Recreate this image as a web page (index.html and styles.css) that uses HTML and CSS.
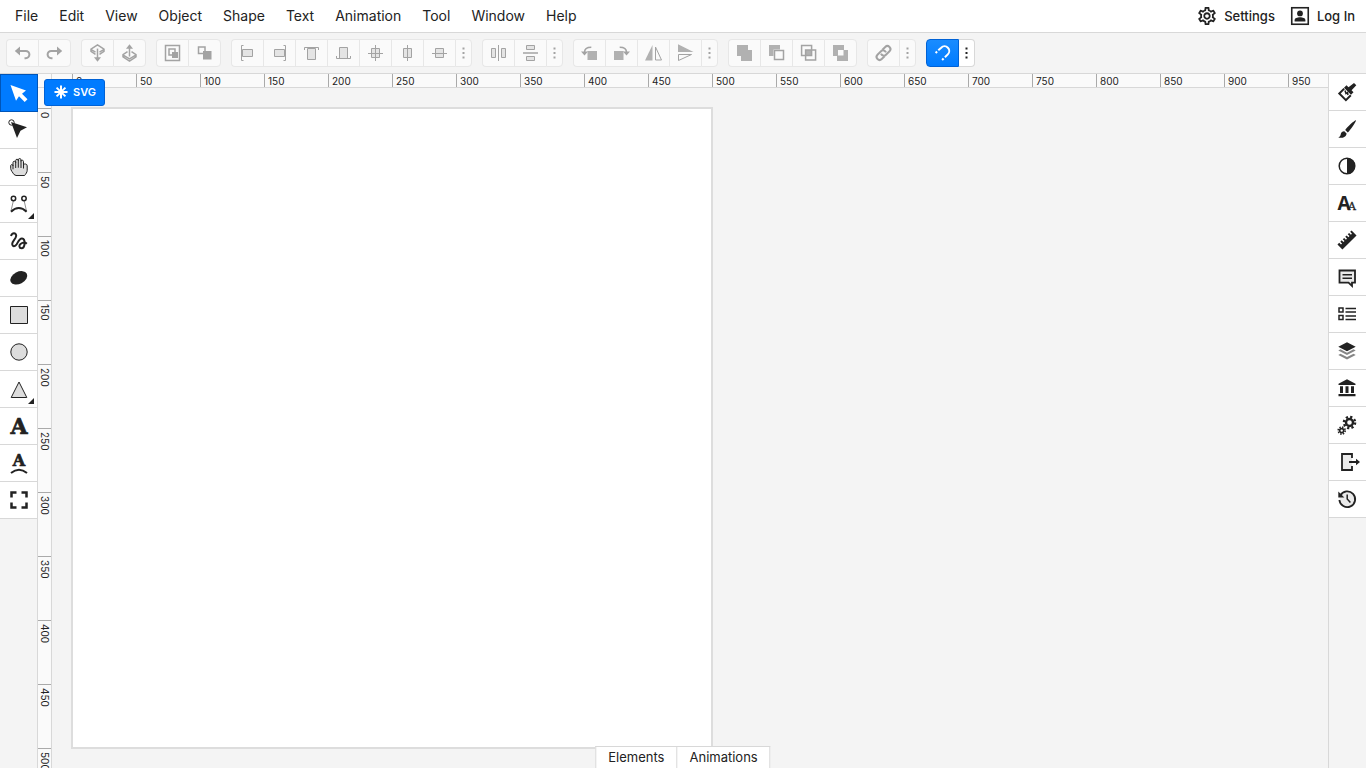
FILE: index.html
```html
<!DOCTYPE html>
<html lang="en">

<head>
    <meta charset="UTF-8">
    <meta name="viewport" content="width=device-width, initial-scale=1.0">
    <title>SVG Editor</title>
    <link rel="stylesheet" href="styles.css">
</head>

<body>
    <!-- HEADER -->
    <header class="Header">
        <nav class="Header-menu">
            <button class="Header-item">File</button>
            <button class="Header-item">Edit</button>
            <button class="Header-item">View</button>
            <button class="Header-item">Object</button>
            <button class="Header-item">Shape</button>
            <button class="Header-item">Text</button>
            <button class="Header-item">Animation</button>
            <button class="Header-item">Tool</button>
            <button class="Header-item">Window</button>
            <button class="Header-item">Help</button>
        </nav>
        <div class="Header-account">
            <button class="Header-action">
                <svg width="20" height="20" viewBox="1 1 22 22"><path fill="currentColor" d="M19.43 12.98c.04-.32.07-.64.07-.98 0-.34-.03-.66-.07-.98l2.11-1.65c.19-.15.24-.42.12-.64l-2-3.46c-.09-.16-.26-.25-.44-.25-.06 0-.12.01-.17.03l-2.49 1c-.52-.4-1.08-.73-1.69-.98l-.38-2.65C14.46 2.18 14.25 2 14 2h-4c-.25 0-.46.18-.49.42l-.38 2.65c-.61.25-1.17.59-1.69.98l-2.49-1c-.06-.02-.12-.03-.18-.03-.17 0-.34.09-.43.25l-2 3.46c-.13.22-.07.49.12.64l2.11 1.65c-.04.32-.07.65-.07.98 0 .33.03.66.07.98l-2.11 1.65c-.19.15-.24.42-.12.64l2 3.46c.09.16.26.25.44.25.06 0 .12-.01.17-.03l2.49-1c.52.4 1.08.73 1.69.98l.38 2.65c.03.24.24.42.49.42h4c.25 0 .46-.18.49-.42l.38-2.65c.61-.25 1.17-.59 1.69-.98l2.49 1c.06.02.12.03.18.03.17 0 .34-.09.43-.25l2-3.46c.12-.22.07-.49-.12-.64l-2.11-1.65zm-1.98-1.71c.04.31.05.52.05.73 0 .21-.02.43-.05.73l-.14 1.13.89.7 1.08.84-.7 1.21-1.27-.51-1.04-.42-.9.68c-.43.32-.84.56-1.25.73l-1.06.43-.16 1.13-.2 1.35h-1.4l-.19-1.35-.16-1.13-1.06-.43c-.43-.18-.83-.41-1.23-.71l-.91-.7-1.06.43-1.27.51-.7-1.21 1.08-.84.89-.7-.14-1.13c-.03-.31-.05-.54-.05-.74s.02-.43.05-.73l.14-1.13-.89-.7-1.08-.84.7-1.21 1.27.51 1.04.42.9-.68c.43-.32.84-.56 1.25-.73l1.06-.43.16-1.13.2-1.35h1.39l.19 1.35.16 1.13 1.06.43c.43.18.83.41 1.23.71l.91.7 1.06-.43 1.27-.51.7 1.21-1.07.85-.89.7.14 1.13zM12 8c-2.21 0-4 1.79-4 4s1.79 4 4 4 4-1.79 4-4-1.79-4-4-4zm0 6c-1.1 0-2-.9-2-2s.9-2 2-2 2 .9 2 2-.9 2-2 2z"/></svg>
                Settings
            </button>
            <button class="Header-action">
                <svg width="20" height="20" viewBox="0 0 20 20"><rect x="1.75" y="1.75" width="16.5" height="16.5" fill="none" stroke="currentColor" stroke-width="1.6"/><circle cx="10" cy="7.4" r="2.9" fill="currentColor"/><path fill="currentColor" d="M4.6 15.4v-1.3c0-1.8 2.7-2.8 5.4-2.8s5.4 1 5.4 2.8v1.3z"/></svg>
                Log In
            </button>
        </div>
    </header>

    <!-- TOOLBAR -->
    <div class="Toolbar">
        <div class="Toolbar-group">
            <button class="Toolbar-button" aria-label="Undo" disabled><svg width="17" height="18"><path class="fill" d="M.8 7 6 2.500v9z"/><path class="line-bold" d="M5 7h6.800a3.600 3.600 0 0 1 0 7.200H10.500"/></svg></button>
            <button class="Toolbar-button" aria-label="Redo" disabled><svg width="17" height="18"><path class="fill" d="M16.200 7 11 2.500v9z"/><path class="line-bold" d="M12 7H5.200a3.600 3.600 0 0 0 0 7.200H6.500"/></svg></button>
        </div>
        <div class="Toolbar-group">
            <button class="Toolbar-button" aria-label="Send backward" disabled><svg width="17" height="18"><path class="line" d="M6.500 10.300 2 7.400V5.200L8.500.9 15 5.200v2.200l-4.500 2.900M2.300 5.600l4.200 2.500M14.700 5.600l-4.200 2.500"/><path class="line" d="M8.500 4.600V14"/><path class="fill" d="M5 13.200h7l-3.500 4.600z"/></svg></button>
            <button class="Toolbar-button" aria-label="Bring forward" disabled><svg width="17" height="18"><path class="line" d="M6.500 7.700 2 10.600v2.200l6.500 4.300 6.500-4.300v-2.200l-4.500-2.900M2.300 11.200l6.200 3.600 6.200-3.600"/><path class="line" d="M8.500 4v8.500"/><path class="fill" d="M5 4.800h7L8.500.2z"/></svg></button>
        </div>
        <div class="Toolbar-group">
            <button class="Toolbar-button" aria-label="Group" disabled><svg width="17" height="18"><path class="line" d="M1.500 1.500h14v15h-14z"/><path class="line" d="M5 5h6v6H5z"/><path class="fill" d="M8 8h6v6H8z"/></svg></button>
            <button class="Toolbar-button" aria-label="Ungroup" disabled><svg width="17" height="18"><path class="line" d="M2.500 3h6.500v6.500H2.500z"/><path class="fill" d="M7 7h8.500v8.500H7z"/></svg></button>
        </div>
        <div class="Toolbar-group">
            <button class="Toolbar-button" aria-label="Align left" disabled><svg width="17" height="18"><path class="shade" d="M3.500 5.500h10v7h-10z"/><path class="thin" d="M4.500 1.500h-2v15h2"/></svg></button>
            <button class="Toolbar-button" aria-label="Align right" disabled><svg width="17" height="18"><path class="shade" d="M3.500 5.500h10v7h-10z"/><path class="thin" d="M12.500 1.500h2v15h-2"/></svg></button>
            <button class="Toolbar-button" aria-label="Align top" disabled><svg width="17" height="18"><path class="shade" d="M4.500 4.500h8v11h-8z"/><path class="thin" d="M1.500 6V3.500h14V6"/></svg></button>
            <button class="Toolbar-button" aria-label="Align bottom" disabled><svg width="17" height="18"><path class="shade" d="M4.500 3.500h8v11h-8z"/><path class="thin" d="M1.500 12v2.500h14V12"/></svg></button>
            <button class="Toolbar-button" aria-label="Align center" disabled><svg width="17" height="18"><path class="shade" d="M4.500 4.500h8v9h-8z"/><path class="thin" d="M8.500 1v16M1 9.500h15"/></svg></button>
            <button class="Toolbar-button" aria-label="Align horizontal center" disabled><svg width="17" height="18"><path class="shade" d="M4.500 4.500h8v9h-8z"/><path class="thin" d="M8.500 1v16"/></svg></button>
            <button class="Toolbar-button" aria-label="Align vertical center" disabled><svg width="17" height="18"><path class="shade" d="M4.500 4.500h8v9h-8z"/><path class="thin" d="M1 9.500h15"/></svg></button>
            <button class="Toolbar-more" aria-label="More align options" disabled><svg width="3" height="18"><path class="fill" d="M.5 3.500h2v2h-2zM.5 8h2v2h-2zM.5 12.500h2v2h-2z"/></svg></button>
        </div>
        <div class="Toolbar-group">
            <button class="Toolbar-button" aria-label="Distribute horizontally" disabled><svg width="17" height="18"><path class="shade" d="M1.500 4.500h4v9h-4zM11.500 4.500h4v9h-4z"/><path class="thin" d="M8.500 1v16"/></svg></button>
            <button class="Toolbar-button" aria-label="Distribute vertically" disabled><svg width="17" height="18"><path class="shade" d="M4.500 1.500h8v4h-8zM4.500 12.500h8v4h-8z"/><path class="line" d="M1 9h15"/></svg></button>
            <button class="Toolbar-more" aria-label="More distribute options" disabled><svg width="3" height="18"><path class="fill" d="M.5 3.500h2v2h-2zM.5 8h2v2h-2zM.5 12.500h2v2h-2z"/></svg></button>
        </div>
        <div class="Toolbar-group">
            <button class="Toolbar-button" aria-label="Rotate left" disabled><svg width="17" height="18"><path class="block" d="M6.500 7H16v9H6.500z"/><path class="line" d="M3.500 8.500c0-3.300 2-5.200 6.800-5.200"/><path class="fill" d="M0 7.500h7l-3.500 4z"/></svg></button>
            <button class="Toolbar-button" aria-label="Rotate right" disabled><svg width="17" height="18"><path class="block" d="M1 7h9.500v9H1z"/><path class="line" d="M13.500 8.500c0-3.300-2-5.200-6.800-5.200"/><path class="fill" d="M17 7.500h-7l3.500 4z"/></svg></button>
            <button class="Toolbar-button" aria-label="Flip horizontal" disabled><svg width="17" height="18"><path class="block" d="M7.500 1v15.500H0z"/><path class="thin" d="M10.500 3v13h6z"/></svg></button>
            <button class="Toolbar-button" aria-label="Flip vertical" disabled><svg width="17" height="18"><path class="block" d="M1 8h15.500L1 .3z"/><path class="thin" d="M1.500 10.500h13l-13 6z"/></svg></button>
            <button class="Toolbar-more" aria-label="More transform options" disabled><svg width="3" height="18"><path class="fill" d="M.5 3.500h2v2h-2zM.5 8h2v2h-2zM.5 12.500h2v2h-2z"/></svg></button>
        </div>
        <div class="Toolbar-group">
            <button class="Toolbar-button" aria-label="Unite" disabled><svg width="17" height="18"><path class="block" d="M1 1h11v5h4v11H5v-5H1z"/></svg></button>
            <button class="Toolbar-button" aria-label="Subtract" disabled><svg width="17" height="18"><path class="block" d="M1 1h11v4.500H5.500V12H1z"/><path class="line" d="M6.500 6.500h9v9h-9z"/></svg></button>
            <button class="Toolbar-button" aria-label="Intersect" disabled><svg width="17" height="18"><path class="line" d="M1.600 1.600h10v10h-10zM5.600 6h10v10h-10z"/><path class="block" d="M5.600 6h6v5.600h-6z"/></svg></button>
            <button class="Toolbar-button" aria-label="Exclude" disabled><svg width="17" height="18"><path class="block" fill-rule="evenodd" d="M1 1h11v5h4v11H5v-5H1zM6 6v5.500h5.500V6z"/></svg></button>
        </div>
        <div class="Toolbar-group">
            <button class="Toolbar-button" aria-label="Link" disabled><svg width="17" height="18"><g class="line-bold" transform="rotate(-45 8.500 9)"><path d="M7 12H3a3 3 0 0 1 0-6h5a3 3 0 0 1 2.700 4.300"/><path d="M10 6h4a3 3 0 0 1 0 6H9a3 3 0 0 1-2.700-4.300"/></g></svg></button>
            <button class="Toolbar-more" aria-label="More link options" disabled><svg width="3" height="18"><path class="fill" d="M.5 3.500h2v2h-2zM.5 8h2v2h-2zM.5 12.500h2v2h-2z"/></svg></button>
        </div>
        <div class="Toolbar-group">
            <button class="Toolbar-button is-active" aria-label="Snapping"><svg width="17" height="18"><path class="line-bold" d="m4.300 6.300 2.900-2.600a4.700 4.700 0 0 1 6.600 6.700l-2.900 2.900"/><path class="line-bold" d="m1.600 9 1.500-1.500M8.100 16l1.500-1.500"/></svg></button>
            <button class="Toolbar-more" aria-label="Snapping options"><svg width="3" height="18"><path class="fill" d="M.5 3.500h2v2h-2zM.5 8h2v2h-2zM.5 12.500h2v2h-2z"/></svg></button>
        </div>
    </div>

    <!-- MAIN -->
    <main class="Main">
        <!-- Drawing tools -->
        <aside class="Tools">
            <button class="Tools-button is-active" aria-label="Select"><svg width="19" height="20"><path class="fill" d="M1.500 2 17 7.500l-4 3.300 5.500 5.400-2.800 2.700-5.700-5.600L7 17.800z"/></svg></button>
            <button class="Tools-button" aria-label="Edit nodes"><svg width="19" height="20"><circle class="thin" cx="2.500" cy="2.500" r="2.700"/><path class="fill" d="m2 2 16 5.300-6.500 3.500L8 18z"/></svg></button>
            <button class="Tools-button" aria-label="Pan"><svg width="19" height="20"><path class="shade" d="M5 17.500c-1-1.500-3.300-4.300-3.300-6V8.700c0-1.500 2.300-1.500 2.300.2V5.500c0-1.700 2.700-1.700 2.700 0v-2c0-1.700 2.600-1.700 2.600 0v-.7c0-1.700 2.700-1.700 2.700 0v1.400c.2-1.500 2.500-1.300 2.500.4v3.200c.4-1.300 3.700-1.200 3.700 1v4.500c0 1.900-1.400 3.700-2.600 5.200H7z"/><path class="thin" d="M4 8.500v3.800M6.700 5v6M9.300 3v7.700M12 3.500V11M14.500 6.500v5"/></svg></button>
            <button class="Tools-button has-menu" aria-label="Bezier"><svg width="19" height="20"><circle class="line" cx="4.500" cy="4.500" r="2.200"/><circle class="line" cx="15" cy="4.500" r="2.200"/><path class="hair" d="M4.300 7 2 17M15.200 7l2.300 10"/><path class="line-bold" d="M2 17.800q7.800-7.600 15.600 0"/></svg></button>
            <button class="Tools-button" aria-label="Freehand"><svg width="19" height="20"><path class="line-bold" d="M2 5C3 1.500 7.300 1.500 7.200 4.800 7 8 3 10.500 3.200 13c.3 3 3 2.700 4.500.3C9.300 10.500 10.500 7.300 13 7.500c4 .5 3 9.800-.5 9.800-2.500 0-2.700-3-1-4.300 2-1.500 4.500-2 6.300-.3"/></svg></button>
            <button class="Tools-button" aria-label="Brush blob"><svg width="19" height="20"><ellipse class="fill" cx="9.800" cy="9.800" rx="9" ry="6" transform="rotate(-27 9.800 9.800)"/></svg></button>
            <button class="Tools-button" aria-label="Rectangle"><svg width="19" height="20"><path class="shade" d="M1.500 1.500h17v17h-17z"/></svg></button>
            <button class="Tools-button" aria-label="Ellipse"><svg width="19" height="20"><circle class="shade" cx="10" cy="10" r="8.200"/></svg></button>
            <button class="Tools-button has-menu" aria-label="Polygon"><svg width="19" height="20"><path class="shade" d="m10 3 7.800 15.500H2.200z"/></svg></button>
            <button class="Tools-button" aria-label="Text"><svg width="19" height="20"><text class="letter" x="10" y="18" font-size="22">A</text></svg></button>
            <button class="Tools-button" aria-label="Text on path"><svg width="19" height="20"><text class="letter" x="10" y="13" font-size="16">A</text><path class="line-bold" d="M2 20q8-6.500 16 0"/></svg></button>
            <button class="Tools-button" aria-label="View box"><svg width="19" height="20"><path class="line-corner" d="M2.500 7.500v-5h5M12.500 2.500h5v5M17.500 12.500v5h-5M7.500 17.500h-5v-5"/></svg></button>
        </aside>

        <!-- Drawing area with rulers -->
        <section class="Stage">
            <div class="Ruler-corner"></div>
            <div class="Ruler Ruler--top">
                <span>0</span><span>50</span><span>100</span><span>150</span><span>200</span>
                <span>250</span><span>300</span><span>350</span><span>400</span><span>450</span>
                <span>500</span><span>550</span><span>600</span><span>650</span><span>700</span>
                <span>750</span><span>800</span><span>850</span><span>900</span><span>950</span>
            </div>
            <div class="Ruler Ruler--left">
                <span>0</span><span>50</span><span>100</span><span>150</span><span>200</span>
                <span>250</span><span>300</span><span>350</span><span>400</span><span>450</span>
                <span>500</span>
            </div>
            <div class="Canvas">
                <div class="Canvas-page"></div>
            </div>
            <button class="Badge">
                <svg width="14" height="14"><path d="M7 .5v13M.5 7h13M2.600 2.600l8.800 8.800M11.400 2.600l-8.800 8.800" stroke="currentColor" stroke-width="2"/></svg>
                SVG
            </button>
            <div class="Tabs">
                <button class="Tabs-item">Elements</button>
                <button class="Tabs-item">Animations</button>
            </div>
        </section>

        <!-- Panels -->
        <aside class="Panels">
            <button class="Panels-button" aria-label="Fill"><svg width="19" height="20"><path class="fill" d="m16 1 2.300 2.300-4.700 4.900 1.900 2-2.500 2.500L6 5.800 8.500 3.300l2 2z"/><path class="line-bold" d="m6.200 6.600-4.900 4.900 6.600 6.600 4.900-4.900"/><path class="line" d="m7 8.500 1 3 1.500-1 .5 2.500"/></svg></button>
            <button class="Panels-button" aria-label="Stroke"><svg width="19" height="20"><path class="fill" d="M18 1.200c.4.800-5.800 10.300-8.200 12.200L7.200 11C9 8 17 .7 18 1.200zM6.300 12.200l2.300 2.200c-.3 4.100-5.200 5-8.300 4 2-.6 2.200-1.800 2.500-3.400.4-2 1.900-2.900 3.500-2.800z"/></svg></button>
            <button class="Panels-button" aria-label="Opacity"><svg width="19" height="20"><circle class="line" cx="9" cy="10" r="7.800"/><path class="fill" d="M9 2a8 8 0 0 1 0 16z"/></svg></button>
            <button class="Panels-button" aria-label="Typography"><svg width="19" height="20"><text class="letter letter--sans" x="6" y="17" font-size="19">A</text><text class="letter letter--small" x="14" y="17" font-size="11">A</text></svg></button>
            <button class="Panels-button" aria-label="Geometry"><svg width="19" height="20"><g transform="rotate(-45 9 10)"><path class="fill" d="M-1 6.500h2.500V9H3V6.500h2V9h1.500V6.500h2V9H10V6.500h2V9h1.500V6.500h2V9H17V6.500h2v7H-1z"/></g></svg></button>
            <button class="Panels-button" aria-label="Comments"><svg width="19" height="20"><path class="shade shade--bold" d="M1.500 3.500h15.500v12.200h-3V19l-3.500-3.300h-9z"/><path class="line" d="M4.500 7.700H14M4.500 11.300H14"/></svg></button>
            <button class="Panels-button" aria-label="Attributes"><svg width="19" height="20"><path class="line" d="M1 4h4v4H1zM1 11.500h4v4H1zM7.500 4.500H18M7.500 8H18M7.500 12H18M7.500 15.500H18"/></svg></button>
            <button class="Panels-button" aria-label="Layers"><svg width="19" height="20"><path class="fill" d="m9 1.200 8.700 4.500L9 10.300.3 5.700z"/><path class="fill" opacity=".55" d="m.3 9.500 2.200-1.200L9 11.700l6.500-3.400 2.200 1.200L9 14.100zM.3 13.900l2.200-1.200L9 16.100l6.500-3.400 2.200 1.200L9 18.600z"/></svg></button>
            <button class="Panels-button" aria-label="Library"><svg width="19" height="20"><path class="fill" d="m9 1.200 8.500 4.500V7H.5V5.700zM2 8.300h3V15H2zM7.500 8.300h3V15h-3zM13 8.300h3V15h-3zM.5 16h17v2.200H.5z"/></svg></button>
            <button class="Panels-button" aria-label="Generators"><svg width="19" height="20"><circle class="gear" cx="11.500" cy="7.500" r="3.500"/><circle class="gear" cx="11.500" cy="7.500" r="5.600" stroke-dasharray="2.200 2.198"/><circle class="gear gear--small" cx="3.700" cy="15.600" r="2"/><circle class="gear gear--small" cx="3.700" cy="15.600" r="3.500" stroke-dasharray="1.400 1.349"/></svg></button>
            <button class="Panels-button" aria-label="Export"><svg width="19" height="20"><path class="shade shade--bold" d="M14 6V2H4v16h10v-4"/><path class="line-bold" d="M11 10h8"/><path class="fill" d="M18 6.800 22 10l-4 3.200z"/></svg></button>
            <button class="Panels-button" aria-label="History"><svg width="19" height="20"><path class="shade shade--bold" d="M2.300 6.500a7.900 7.900 0 1 1-.9 4.500"/><path class="fill" d="M.3 2.500v6h6z"/><path class="line" d="M9.200 5.500V10l3.200 3.500"/></svg></button>
        </aside>
    </main>
</body>

</html>
```
FILE: styles.css
```css
/* GENERAL VARIABLES */
:root {
    --color-background: #f4f4f4;
    --color-text: #222;
    --color-muted: #a3a3a3;
    --color-border: #d8d8d8;
    --color-accent: #007bff;
    --color-accent-dark: #0062d6;
}

/* RESET */
* {
    margin: 0;
    padding: 0;
    box-sizing: border-box;
}

body {
    display: flex;
    flex-direction: column;
    height: 100vh;
    overflow: hidden;
    background-color: var(--color-background);
    color: var(--color-text);
    font-family: Inter, "Liberation Sans", sans-serif;
}

button {
    border: 0;
    background: none;
    color: inherit;
    font: inherit;
    cursor: pointer;
}

button:disabled {
    cursor: default;
}

svg {
    display: block;
    flex: none;
    overflow: visible;
}

/* ICON STROKES */
.fill {
    fill: currentColor;
}

.block {
    fill: currentColor;
    opacity: 0.85;
}

.line,
.line-bold,
.line-corner,
.thin,
.hair {
    fill: none;
    stroke: currentColor;
    stroke-width: 1.5;
}

.line-bold {
    stroke-width: 2;
}

.line-corner {
    stroke-width: 2.5;
}

.thin {
    stroke-width: 1;
}

.hair {
    stroke-width: 0.5;
}

.shade {
    fill: #ddd;
    stroke: currentColor;
    stroke-width: 1;
}

.shade--bold {
    fill: #eaeaea;
    stroke-width: 1.8;
}

.letter {
    fill: currentColor;
    stroke: currentColor;
    stroke-width: 0.7;
    font-family: "DejaVu Serif", serif;
    font-weight: bold;
    text-anchor: middle;
}

.letter--sans {
    stroke: none;
    font-family: "Open Sans", sans-serif;
}

.letter--small {
    stroke-width: 0.3;
    font-weight: normal;
}

.gear {
    fill: none;
    stroke: currentColor;
    stroke-width: 2.4;
}

.gear--small {
    stroke-width: 1.6;
}

/* HEADER */
.Header {
    display: flex;
    justify-content: space-between;
    height: 33px;
    padding: 0 6px 0 4px;
    background-color: #fff;
    border-bottom: 1px solid var(--color-border);
}

.Header-menu,
.Header-account {
    display: flex;
}

.Header-item {
    padding: 0 10px 2px 11px;
    font-size: 14px;
}

.Header-action {
    display: flex;
    align-items: center;
    gap: 7px;
    padding: 0 5px 0 10px;
    font-size: 13px;
    font-weight: 500;
}

/* TOOLBAR */
.Toolbar {
    display: flex;
    align-items: center;
    gap: 10px;
    height: 41px;
    padding: 0 6px;
    border-bottom: 1px solid var(--color-border);
}

.Toolbar-group {
    display: flex;
}

.Toolbar-button,
.Toolbar-more {
    display: flex;
    align-items: center;
    justify-content: center;
    width: 32px;
    height: 28px;
    background-color: #fff;
    border: 1px solid var(--color-border);
    border-right-width: 0;
}

.Toolbar-more {
    width: 17px;
}

.Toolbar-button:disabled,
.Toolbar-more:disabled {
    background-color: #fafafa;
    border-color: #e7e7e7;
    color: var(--color-muted);
}

.Toolbar-button:disabled .shade {
    fill: #e4e4e4;
}

.Toolbar-button:first-child {
    border-radius: 4px 0 0 4px;
}

.Toolbar-button:last-child,
.Toolbar-more:last-child {
    border-right-width: 1px;
    border-radius: 0 4px 4px 0;
}

.Toolbar-button:last-child {
    width: 33px;
}

.Toolbar-button.is-active {
    width: 33px;
    background: linear-gradient(#1a8cff, #007bff);
    border: 1px solid var(--color-accent-dark);
    color: #fff;
}

.Toolbar-button.is-active + .Toolbar-more {
    width: 16px;
    border-left-width: 0;
}

/* MAIN */
.Main {
    display: flex;
    flex: 1;
    min-height: 0;
}

/* Left tools */
.Tools {
    width: 38px;
    border-right: 1px solid var(--color-border);
}

.Tools-button,
.Panels-button {
    display: flex;
    align-items: center;
    justify-content: center;
    width: 100%;
    height: 37px;
    background-color: #fff;
    border-bottom: 1px solid var(--color-border);
}

.Tools-button.is-active {
    width: 38px;
    height: 38px;
    padding-right: 1px;
    background-color: var(--color-accent);
    border: 1px solid #0055b8;
    color: #fff;
}

.Tools-button.has-menu {
    position: relative;
}

.Tools-button.has-menu::after {
    content: "";
    position: absolute;
    right: 3px;
    bottom: 3px;
    border-bottom: 6px solid var(--color-text);
    border-left: 6px solid transparent;
}

/* Right panels */
.Panels {
    width: 38px;
    border-left: 1px solid var(--color-border);
}

/* Stage */
.Stage {
    position: relative;
    display: grid;
    grid-template-columns: 14px 1fr;
    grid-template-rows: 14px 1fr;
    flex: 1;
    min-width: 0;
    overflow: hidden;
}

.Ruler-corner {
    background-color: #fafafa;
    border-right: 1px solid var(--color-border);
    border-bottom: 1px solid var(--color-border);
}

.Ruler {
    display: flex;
    overflow: hidden;
    background-color: #fafafa;
    font-size: 10px;
}

.Ruler span {
    flex: none;
}

.Ruler--top {
    padding-left: 20px;
    border-bottom: 1px solid var(--color-border);
    line-height: 14px;
}

.Ruler--top span {
    width: 64px;
    padding-left: 3px;
    border-left: 1px solid #aaa;
}

.Ruler--left {
    flex-direction: column;
    padding-top: 20px;
    border-right: 1px solid var(--color-border);
    line-height: 13px;
}

.Ruler--left span {
    height: 64px;
    padding-top: 3px;
    border-top: 1px solid #aaa;
    writing-mode: vertical-rl;
}

.Canvas {
    min-width: 0;
    min-height: 0;
    padding: 19px;
    overflow: hidden;
}

.Canvas-page {
    width: 642px;
    height: 642px;
    background-color: #fff;
    border: 2px solid #ddd;
}

.Badge {
    position: absolute;
    top: 5px;
    left: 6px;
    display: flex;
    align-items: center;
    gap: 5px;
    height: 27px;
    padding: 0 8px 1px 9px;
    background-color: var(--color-accent);
    border: 1px solid var(--color-accent-dark);
    border-radius: 3px;
    color: #fff;
    font-size: 11px;
    font-weight: 600;
}

/* Bottom tabs */
.Tabs {
    position: absolute;
    bottom: 0;
    left: 50%;
    display: flex;
    height: 22px;
    background-color: #fff;
    border: 1px solid var(--color-border);
    border-bottom: 0;
    transform: translateX(-50%);
}

.Tabs-item {
    padding: 0 12px 1px;
    font-size: 13px;
}

.Tabs-item + .Tabs-item {
    border-left: 1px solid var(--color-border);
}
```
